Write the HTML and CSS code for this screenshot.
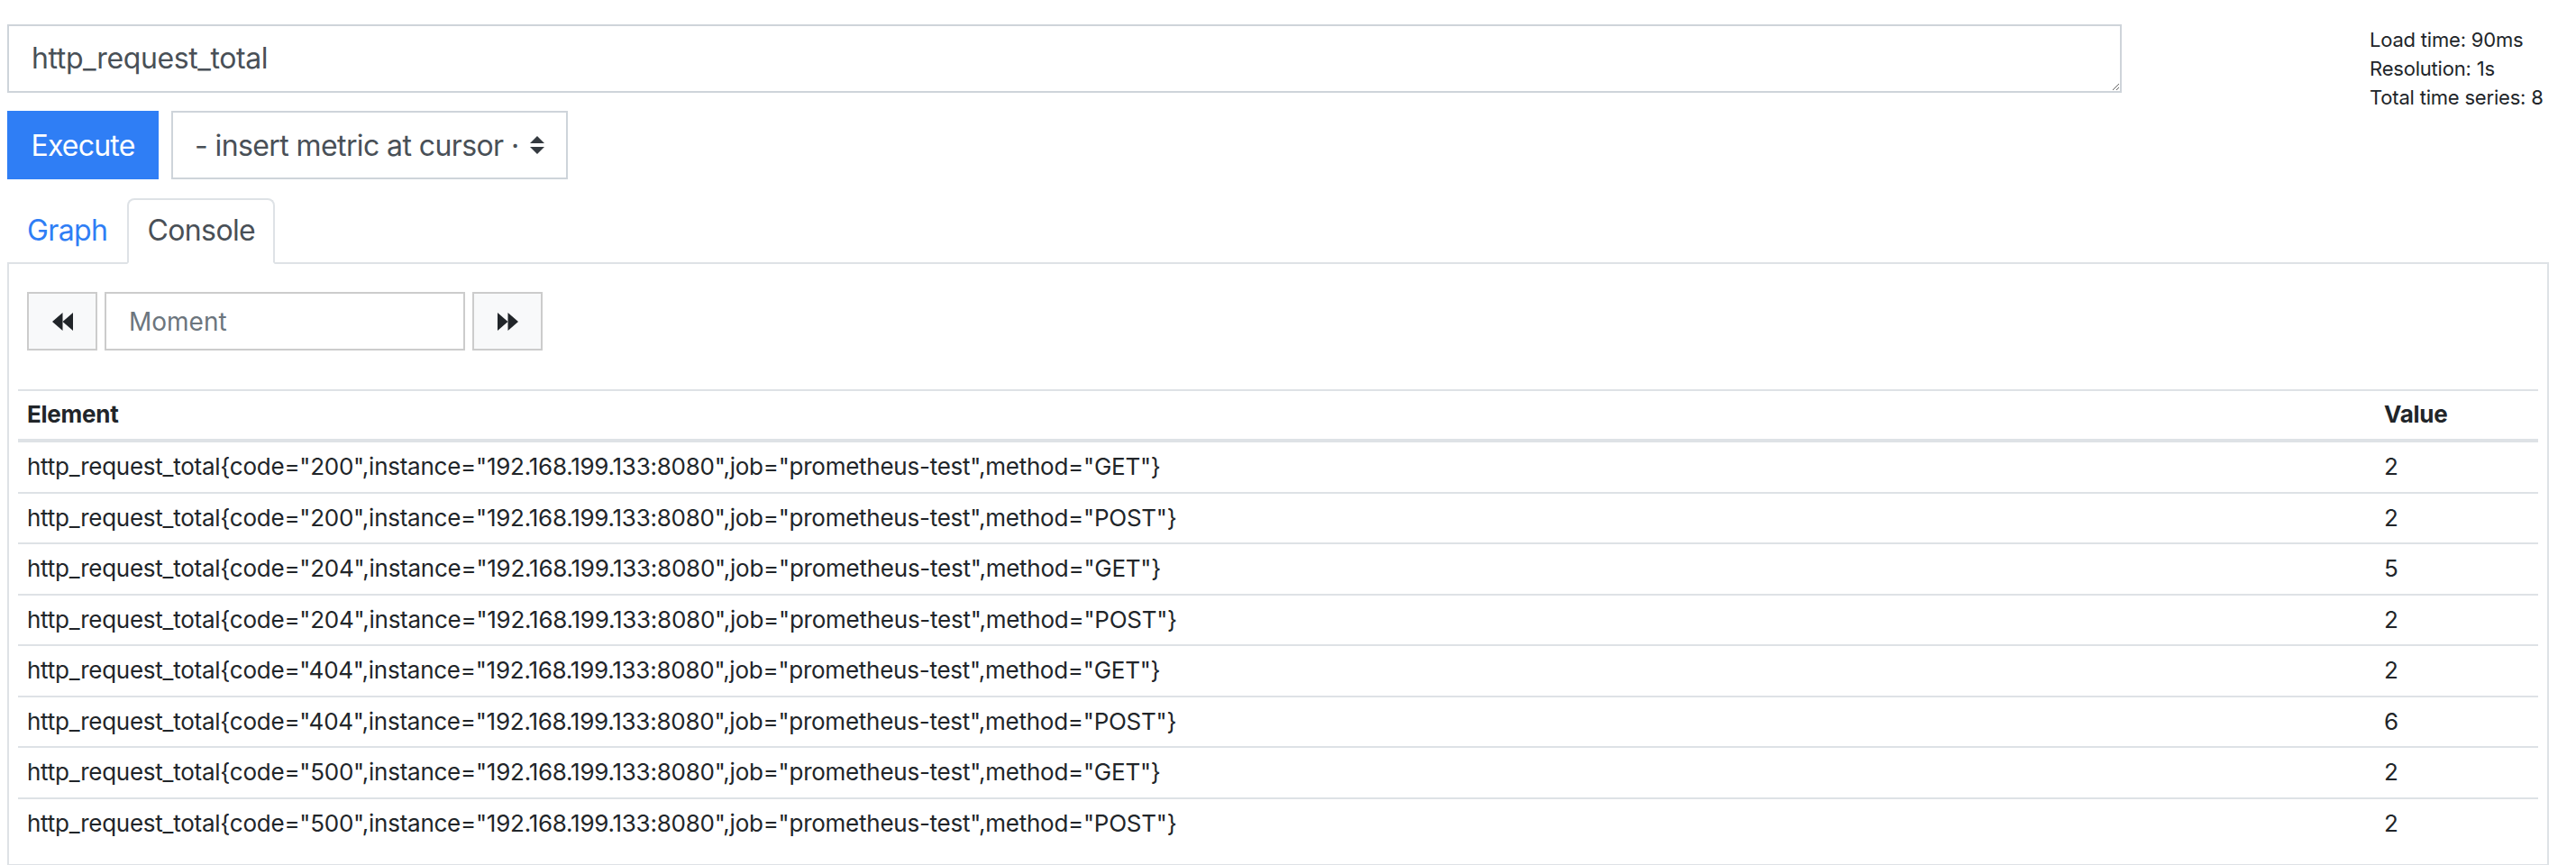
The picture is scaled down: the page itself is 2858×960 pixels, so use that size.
FILE: index.html
```html
<!DOCTYPE html>
<html>
<head>
    <title>Prometheus Time Series Collection and Processing Server</title>
    <link rel="stylesheet" href="styles.css">
</head>
<body>
    <div class="page">
        <div class="top-row">
            <div class="query">
                <textarea class="expression" rows="1">http_request_total</textarea>
                <div class="actions">
                    <button class="execute">Execute</button>
                    <div class="metric-select">
                        <span class="metric-label">- insert metric at cursor ·</span>
                        <svg class="select-arrows" width="16" height="20" viewBox="0 0 16 20">
                            <polygon points="8,0 16,8 0,8" fill="#343a40"/>
                            <polygon points="0,12 16,12 8,20" fill="#343a40"/>
                        </svg>
                    </div>
                </div>
            </div>
            <div class="stats">
                <div>Load time: 90ms</div>
                <div>Resolution: 1s</div>
                <div>Total time series: 8</div>
            </div>
        </div>

        <ul class="tabs">
            <li class="tab">Graph</li>
            <li class="tab active">Console</li>
        </ul>

        <div class="panel">
            <div class="moment-row">
                <button class="moment-btn" title="Rewind">
                    <svg width="23" height="20" viewBox="0 0 23 20">
                        <polygon points="0,10 11.5,0 11.5,20" fill="#212529"/>
                        <polygon points="11.5,10 23,0 23,20" fill="#212529"/>
                    </svg>
                </button>
                <input class="moment-input" type="text" placeholder="Moment">
                <button class="moment-btn" title="Forward">
                    <svg width="23" height="20" viewBox="0 0 23 20">
                        <polygon points="0,0 11.5,10 0,20" fill="#212529"/>
                        <polygon points="11.5,0 23,10 11.5,20" fill="#212529"/>
                    </svg>
                </button>
            </div>

            <table class="results">
                <thead>
                    <tr>
                        <th>Element</th>
                        <th class="value-col">Value</th>
                    </tr>
                </thead>
                <tbody>
                    <tr>
                        <td>http_request_total{code="200",instance="192.168.199.133:8080",job="prometheus-test",method="GET"}</td>
                        <td>2</td>
                    </tr>
                    <tr>
                        <td>http_request_total{code="200",instance="192.168.199.133:8080",job="prometheus-test",method="POST"}</td>
                        <td>2</td>
                    </tr>
                    <tr>
                        <td>http_request_total{code="204",instance="192.168.199.133:8080",job="prometheus-test",method="GET"}</td>
                        <td>5</td>
                    </tr>
                    <tr>
                        <td>http_request_total{code="204",instance="192.168.199.133:8080",job="prometheus-test",method="POST"}</td>
                        <td>2</td>
                    </tr>
                    <tr>
                        <td>http_request_total{code="404",instance="192.168.199.133:8080",job="prometheus-test",method="GET"}</td>
                        <td>2</td>
                    </tr>
                    <tr>
                        <td>http_request_total{code="404",instance="192.168.199.133:8080",job="prometheus-test",method="POST"}</td>
                        <td>6</td>
                    </tr>
                    <tr>
                        <td>http_request_total{code="500",instance="192.168.199.133:8080",job="prometheus-test",method="GET"}</td>
                        <td>2</td>
                    </tr>
                    <tr>
                        <td>http_request_total{code="500",instance="192.168.199.133:8080",job="prometheus-test",method="POST"}</td>
                        <td>2</td>
                    </tr>
                </tbody>
            </table>
        </div>
    </div>
</body>
</html>
```

FILE: styles.css
```css
* {
    box-sizing: border-box;
}
body {
    margin: 0;
    background-color: #fff;
    color: #212529;
    font-family: Inter, "Noto Sans", sans-serif;
}
.page {
    padding: 27px 30px 0 8px;
}
.top-row {
    display: flex;
    justify-content: space-between;
    align-items: flex-start;
}
.query {
    width: 2346px;
}
.expression {
    display: block;
    width: 100%;
    height: 76px;
    padding: 12px 25px;
    font-family: inherit;
    font-size: 32px;
    line-height: 48px;
    letter-spacing: -0.4px;
    color: #495057;
    border: 2px solid #ced4da;
    border-radius: 0;
    resize: vertical;
}
.actions {
    display: flex;
    gap: 14px;
    margin-top: 20px;
}
.execute {
    width: 168px;
    height: 76px;
    padding: 0;
    font-family: inherit;
    font-size: 32px;
    letter-spacing: -0.8px;
    color: #fff;
    background-color: #2f7ef5;
    border: none;
    cursor: pointer;
}
.metric-select {
    display: flex;
    align-items: center;
    width: 440px;
    height: 76px;
    padding: 0 24px;
    border: 2px solid #ced4da;
    font-size: 32px;
    letter-spacing: -0.6px;
    color: #495057;
}
.metric-label {
    width: 357px;
    white-space: nowrap;
}
.select-arrows {
    margin-left: 15px;
}
.stats {
    width: 199px;
    padding-top: 1px;
    font-size: 22px;
    line-height: 32px;
    letter-spacing: -0.2px;
}
.tabs {
    display: flex;
    list-style: none;
    margin: 21px 0 -2px;
    padding: 0;
}
.tab {
    padding: 10px 20px 11px;
    font-size: 32px;
    line-height: 48px;
    letter-spacing: -0.6px;
    color: #2f7ef5;
    border: 2px solid transparent;
    border-radius: 8px 8px 0 0;
}
.tab.active {
    color: #495057;
    background-color: #fff;
    border-color: #dee2e6 #dee2e6 #fff;
}
.panel {
    border: 2px solid #dee2e6;
    padding: 10px 10px 18px;
}
.moment-row {
    display: flex;
    gap: 8px;
    margin: 21px 0 43px 10px;
    height: 65px;
}
.moment-btn {
    display: flex;
    align-items: center;
    justify-content: center;
    width: 78px;
    height: 65px;
    padding: 0;
    background-color: #f8f9fa;
    border: 2px solid #ccc;
    cursor: pointer;
}
.moment-input {
    width: 400px;
    height: 65px;
    padding: 0 25px;
    font-family: inherit;
    font-size: 28px;
    color: #495057;
    border: 2px solid #ccc;
    outline: none;
}
.moment-input::placeholder {
    color: #6c757d;
}
.results {
    width: 100%;
    border-collapse: collapse;
    font-size: 26px;
    letter-spacing: -0.25px;
}
.results th {
    text-align: left;
    font-weight: 700;
    padding: 9px 10px 10px;
    line-height: 34px;
    border-top: 2px solid #dee2e6;
    border-bottom: 4px solid #dee2e6;
}
.results td {
    padding: 10px;
    line-height: 34.5px;
    border-top: 2px solid #dee2e6;
}
.results tbody tr:first-child td {
    border-top: none;
}
.value-col {
    width: 181px;
}
```
